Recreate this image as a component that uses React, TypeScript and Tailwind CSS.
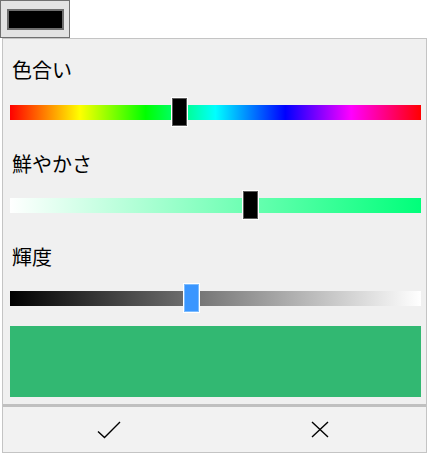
const FONT = { fontFamily: '"Noto Sans CJK JP", "Noto Sans", sans-serif' };

type SliderProps = {
  track: string;
  pos: number;
  thumb: string;
};

// thumb position is computed from value, so inline style is used for left offset
const Slider = ({ track, pos, thumb }: SliderProps) => (
  <div className="relative h-[30px] flex items-center">
    <div className={`w-full h-[15px] ${track}`} />
    <div
      className={`absolute top-0 h-[30px] w-[17px] border border-white ${thumb}`}
      style={{ left: `calc(${pos * 100}% - 8px)` }}
    />
  </div>
);

const Label = ({ text, mt }: { text: string; mt: string }) => (
  <div className={`h-[28px] leading-[28px] text-[20px] text-black pl-[2px] ${mt}`} style={FONT}>
    {text}
  </div>
);

export default function App() {
  return (
    <div className="w-[428px] h-[453px] bg-white relative">
      <div className="w-[70px] h-[38px] border border-[#707070] bg-[#e3e3e3] flex items-center justify-center">
        <div className="w-[57px] h-[21px] bg-black border-2 border-[#6e6e6e]" />
      </div>
      <div className="ml-[2px] w-[425px] h-[415px] border border-[#c4c4c4] bg-[#f0f0f0] flex flex-col">
        <div className="pl-[7px] pr-[5px] flex flex-col">
          <Label text="色合い" mt="mt-[17px]" />
          <div className="mt-[13px]">
            <Slider
              track="bg-[linear-gradient(to_right,#ff0000,#ffff00_17%,#00ff00_33%,#00ffff_50%,#0000ff_67%,#ff00ff_83%,#ff0000)]"
              pos={0.41}
              thumb="bg-black shadow-[inset_0_0_0_1px_#5a5a5a]"
            />
          </div>
          <Label text="鮮やかさ" mt="mt-[23px]" />
          <div className="mt-[12px]">
            <Slider
              track="bg-[linear-gradient(to_right,#ffffff,#00ff7a)]"
              pos={0.585}
              thumb="bg-black shadow-[inset_0_0_0_1px_#5a5a5a]"
            />
          </div>
          <Label text="輝度" mt="mt-[23px]" />
          <div className="mt-[12px]">
            <Slider
              track="bg-[linear-gradient(to_right,#000000,#ffffff)]"
              pos={0.44}
              thumb="bg-[#3a96ff] shadow-[inset_0_0_0_1px_#7cbcff]"
            />
          </div>
          <div className="mt-[13px] h-[71px] bg-[#32b872]" />
        </div>
        <div className="mt-[7px] h-[3px] bg-[#c0c0c0]" />
        <div className="flex flex-1 bg-[#f2f2f2]">
          <button className="flex-1 flex items-center justify-center">
            <svg width="24" height="18" viewBox="0 0 24 18" fill="none" stroke="#000" strokeWidth="1.4">
              <path d="M1 10.5 L7.5 16.5 L23 1" />
            </svg>
          </button>
          <button className="flex-1 flex items-center justify-center">
            <svg width="18" height="17" viewBox="0 0 18 17" fill="none" stroke="#000" strokeWidth="1.4">
              <path d="M1 1 L17 16 M17 1 L1 16" />
            </svg>
          </button>
        </div>
      </div>
    </div>
  );
}
